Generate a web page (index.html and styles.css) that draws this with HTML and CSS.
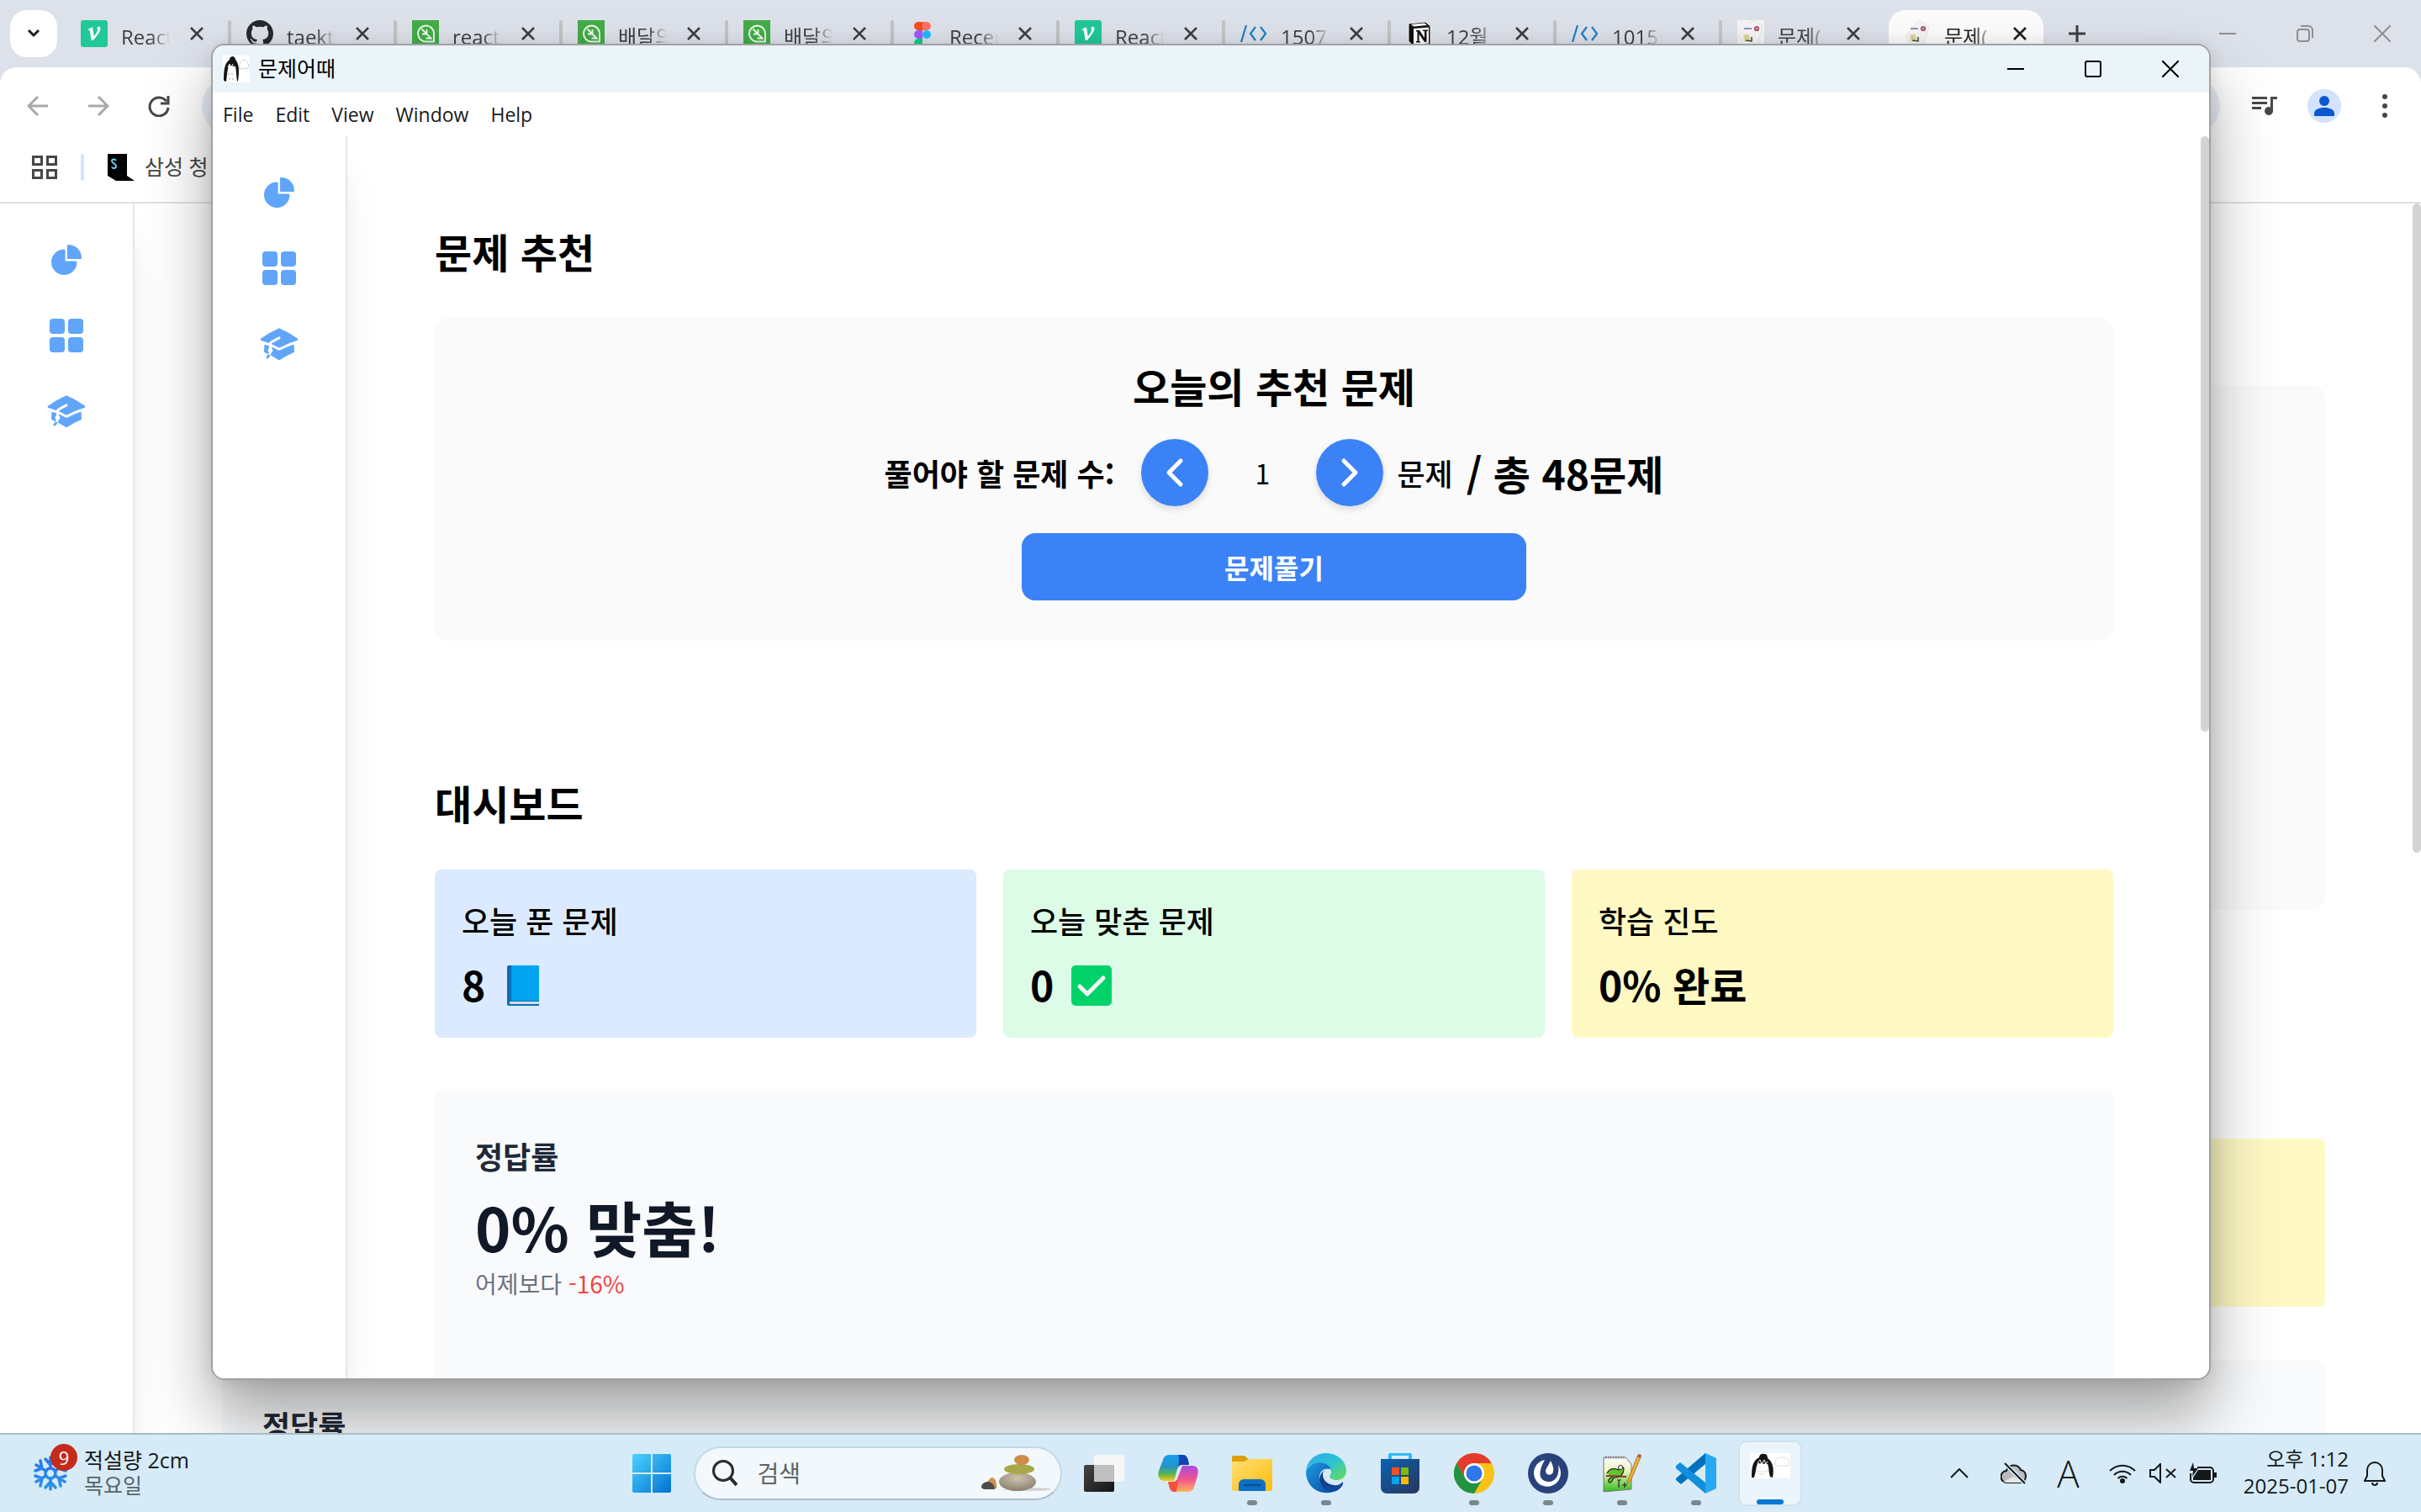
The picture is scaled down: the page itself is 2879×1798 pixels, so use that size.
FILE: index.html
```html
<!DOCTYPE html>
<html lang="ko">
<head>
<meta charset="utf-8">
<title>문제어때</title>
<link rel="stylesheet" href="styles.css">
</head>
<body>
<svg class="defs" aria-hidden="true">
  <defs>
    <linearGradient id="gWin" x1="0" y1="0" x2="1" y2="1"><stop offset="0" stop-color="#4cd3ff"/><stop offset="1" stop-color="#0072d2"/></linearGradient>
    <linearGradient id="gFolder" x1="0" y1="0" x2="1" y2="1"><stop offset="0" stop-color="#ffdf74"/><stop offset="1" stop-color="#fdbd10"/></linearGradient>
    <linearGradient id="gEdgeA" x1="0" y1="0" x2="1" y2="1"><stop offset="0" stop-color="#2ea8f0"/><stop offset=".5" stop-color="#2cc3d2"/><stop offset="1" stop-color="#6be04c"/></linearGradient>
    <linearGradient id="gEdgeB" x1="0" y1="0" x2="1" y2="1"><stop offset="0" stop-color="#1a9be6"/><stop offset="1" stop-color="#0b4aa0"/></linearGradient>
    <linearGradient id="gStore" x1="0" y1="0" x2="1" y2="1"><stop offset="0" stop-color="#0d62b4"/><stop offset="1" stop-color="#27365c"/></linearGradient>
    <linearGradient id="gCopA" x1="0" y1="0" x2="0" y2="1"><stop offset="0" stop-color="#1aa0f0"/><stop offset=".45" stop-color="#2294c8"/><stop offset=".75" stop-color="#5fb648"/><stop offset="1" stop-color="#f6c815"/></linearGradient>
    <linearGradient id="gCopB" x1="0" y1="0" x2="0" y2="1"><stop offset="0" stop-color="#a74ce6"/><stop offset=".5" stop-color="#ee5290"/><stop offset="1" stop-color="#ffb35a"/></linearGradient>
    <linearGradient id="gNpp" x1="0" y1="0" x2="0" y2="1"><stop offset="0" stop-color="#fafafa"/><stop offset=".4" stop-color="#eef5c0"/><stop offset="1" stop-color="#35b81d"/></linearGradient>
    <linearGradient id="gDark" x1="0" y1="0" x2="1" y2="1"><stop offset="0" stop-color="#454545"/><stop offset="1" stop-color="#151515"/></linearGradient>
    <radialGradient id="gStone" cx=".5" cy=".3" r=".8"><stop offset="0" stop-color="#cfc4ae"/><stop offset="1" stop-color="#7f7767"/></radialGradient>
    <linearGradient id="gFlake" x1="0" y1="0" x2="0" y2="1"><stop offset="0" stop-color="#2673ee"/><stop offset="1" stop-color="#2b94e8"/></linearGradient>

    <symbol id="i-pie" viewBox="2.25 2.25 19.5 19.5"><path d="M2.25 13.5a8.25 8.25 0 0 1 8.25-8.25.75.75 0 0 1 .75.75v6.75H18a.75.75 0 0 1 .75.75 8.25 8.25 0 0 1-16.5 0Z"/><path d="M12.5 3a.75.75 0 0 1 .75-.75 8.5 8.5 0 0 1 8.5 8.5.75.75 0 0 1-.75.75h-7.75a.75.75 0 0 1-.75-.75V3Z"/></symbol>
    <symbol id="i-grid" viewBox="0 0 40 40"><rect width="18" height="18" rx="4"/><rect x="22" width="18" height="18" rx="4"/><rect y="22" width="18" height="18" rx="4"/><rect x="22" y="22" width="18" height="18" rx="4"/></symbol>
    <symbol id="i-cap" viewBox="0 0 24 24"><path d="M11.7 2.805a.75.75 0 0 1 .6 0A60.65 60.65 0 0 1 22.83 8.72a.75.75 0 0 1-.231 1.337 49.948 49.948 0 0 0-9.902 3.912l-.003.002c-.114.06-.227.119-.34.18a.75.75 0 0 1-.707 0A50.88 50.88 0 0 0 7.5 12.173v-.224c0-.131.067-.248.172-.311a54.615 54.615 0 0 1 4.653-2.52.75.75 0 0 0-.65-1.352 56.123 56.123 0 0 0-4.78 2.589 1.858 1.858 0 0 0-.859 1.228 49.803 49.803 0 0 0-4.634-1.527.75.75 0 0 1-.231-1.337A60.653 60.653 0 0 1 11.7 2.805Z"/><path d="M13.06 15.473a48.45 48.45 0 0 1 7.666-3.282c.134 1.414.22 2.843.255 4.284a.75.75 0 0 1-.46.711 47.87 47.87 0 0 0-8.105 4.342.75.75 0 0 1-.832 0 47.87 47.87 0 0 0-8.104-4.342.75.75 0 0 1-.461-.71c.035-1.442.121-2.87.255-4.286.921.304 1.83.634 2.726.99v1.27a1.5 1.5 0 0 0-.14 2.508c-.09.38-.222.753-.397 1.11.452.213.901.434 1.346.66a6.727 6.727 0 0 0 .551-1.607 1.5 1.5 0 0 0 .14-2.67v-.645a48.549 48.549 0 0 1 3.44 1.667 2.25 2.25 0 0 0 2.12 0Z"/><path d="M4.462 19.462c.42-.419.753-.89 1-1.395.453.214.902.435 1.347.662a6.742 6.742 0 0 1-1.286 1.794.75.75 0 0 1-1.06-1.06Z"/></symbol>

    <symbol id="i-x" viewBox="0 0 16 16"><path d="M1 1l14 14M15 1L1 15" fill="none" stroke="currentColor" stroke-width="2.6"/></symbol>
    <symbol id="i-velog" viewBox="0 0 32 32"><rect width="32" height="32" rx="3" fill="#20c997"/><path d="M9 10.5l5-2.2 1.8 11c3-4 4.600-6.500 4.300-8.200-.2-1-1.200-1.300-.4-2.600.9-1.300 3.600-1.200 3.700 1.200.1 3.800-4.300 9.200-8.800 14.300h-1.800l-2.300-12.400-1.700.4z" fill="#fff"/></symbol>
    <symbol id="i-github" viewBox="0 0 16 16"><path fill="#24292f" d="M8 0C3.580 0 0 3.580 0 8c0 3.540 2.290 6.530 5.470 7.590.4.070.55-.17.55-.38 0-.19-.01-.82-.01-1.490-2.010.37-2.530-.49-2.690-.94-.09-.23-.48-.94-.82-1.130-.28-.15-.68-.52-.01-.53.63-.01 1.080.58 1.230.82.72 1.210 1.870.87 2.330.66.07-.52.28-.87.51-1.070-1.780-.2-3.640-.89-3.640-3.950 0-.87.31-1.590.82-2.150-.08-.2-.36-1.020.08-2.120 0 0 .67-.21 2.200.82.64-.18 1.320-.27 2-.27s1.360.09 2 .27c1.530-1.040 2.200-.82 2.200-.82.44 1.100.16 1.920.08 2.120.51.56.82 1.270.82 2.150 0 3.070-1.870 3.750-3.650 3.950.29.25.54.73.54 1.480 0 1.070-.01 1.930-.01 2.200 0 .21.15.46.55.38A8.010 8.010 0 0 0 16 8c0-4.420-3.580-8-8-8z"/></symbol>
    <symbol id="i-leaf" viewBox="0 0 32 32"><rect width="32" height="32" fill="#43ac47"/><path d="M26 25.500H16.500A9.500 9.500 0 1 1 26 16v9.500zM11.500 10.500l12 12M17.500 11v5.500H12M16.500 21.500H22" fill="none" stroke="#eef8ee" stroke-width="1.900"/></symbol>
    <symbol id="i-figma" viewBox="0 0 32 32"><path d="M11 2h5v10h-5a5 5 0 0 1 0-10z" fill="#f24e1e"/><path d="M16 2h5a5 5 0 0 1 0 10h-5z" fill="#ff7262"/><path d="M11 12h5v10h-5a5 5 0 0 1 0-10z" fill="#a259ff"/><circle cx="21" cy="17" r="5" fill="#1abcfe"/><path d="M11 22h5v5a5 5 0 1 1-5-5z" fill="#0acf83"/></symbol>
    <symbol id="i-code" viewBox="0 0 32 32"><path d="M7 6L1 26M18 8l-6 8 6 8M24 8l6 8-6 8" fill="none" stroke="#1d7fc6" stroke-width="2.200"/></symbol>
    <symbol id="i-notion" viewBox="0 0 32 32"><path d="M3 4l20-2 6 5v22l-20 2-6-6z" fill="#111" stroke="#f4f4f4" stroke-width="1"/><path d="M6 5l16-1.500 3 2.500-16 1.500zM9 10l18-1.500v19L9 29z" fill="#fff"/><path d="M12 12h4l6 9v-8h-2v-1.500h6V13h-1.500v13H22l-6.500-9.500V25H17v1.500h-5V25h1.500V13.500H12z" fill="#111"/></symbol>
    <symbol id="i-quiz" viewBox="0 0 32 32"><path d="M8 12L18 0l12 8-6 20-16 4-6-14z" fill="#f6f5f4" stroke="#dadada" stroke-width=".6"/><path d="M8 10h9" stroke="#6670b0" stroke-width="1.500"/><circle cx="23" cy="10" r="2.500" fill="#7ba8e0" stroke="#c33" stroke-width="1.200"/><path d="M7 18l6-2 3 7-8 3z" fill="#cfe3a8"/><path d="M8 17l5 2-3 5z" fill="#f0c890"/><path d="M17 20v5l-7-1" fill="none" stroke="#444" stroke-width="1.500"/></symbol>
    <symbol id="i-penguin" viewBox="0 0 48 30"><rect width="48" height="30" fill="#fff"/><path d="M2 29c0-12 1-20 9-24 0-3 3-5 6-4 3 0 4 2 4 5 6 4 8 12 6 23l-3-1c-2-6-1-10-3-15l-12-1c-2 5-2 11-4 17z" fill="#151515"/><path d="M9 12l3-4 2 5 3-5 2 5 2-3" stroke="#fff" stroke-width="1" fill="none"/><path d="M8 20c5 3 10 3 14 0M11 25h6" stroke="#c9c9c9" stroke-width=".7" fill="none"/><path d="M30 15c-1-7 3-10 9-10s8 5 7 10z" fill="none" stroke="#d6d6d6" stroke-width=".8"/></symbol>
    <symbol id="i-penguin-s" viewBox="0 0 32 32"><rect width="32" height="32" fill="#fff"/><path d="M1 30C1 17 2 9 8 5c0-3 2-4 4-4 2 1 3 2 3 4 4 4 5 13 3 25l-1 1c-1-8-1-13-2-18l-8-1C5 18 5 24 4 31z" fill="#151515"/><path d="M6 14l2-4 2 4 2-4" stroke="#fff" fill="none"/><path d="M6 22h8M7 28h6" stroke="#999" stroke-dasharray="2 2" fill="none"/><path d="M20 16c-1-7 2-11 5-11s6 4 6 10z" fill="none" stroke="#bbb" stroke-dasharray="2 1"/></symbol>
  </defs>
</svg>

<div class="desktop">
  <div class="browser">
    <header class="tabstrip">
      <button class="tab-search" aria-label="탭 검색"><svg width="16" height="12" viewBox="0 0 16 12"><path d="M2 2l6 6 6-6" fill="none" stroke="currentColor" stroke-width="3"/></svg></button>
      <div class="tabs">
        <div class="tab"><svg class="fav"><use href="#i-velog"/></svg><span class="tab-title">React</span><button class="tab-x" aria-label="닫기"><svg><use href="#i-x"/></svg></button></div>
        <div class="tab"><svg class="fav"><use href="#i-github"/></svg><span class="tab-title">taekto</span><button class="tab-x" aria-label="닫기"><svg><use href="#i-x"/></svg></button></div>
        <div class="tab"><svg class="fav"><use href="#i-leaf"/></svg><span class="tab-title">react</span><button class="tab-x" aria-label="닫기"><svg><use href="#i-x"/></svg></button></div>
        <div class="tab"><svg class="fav"><use href="#i-leaf"/></svg><span class="tab-title">배달의</span><button class="tab-x" aria-label="닫기"><svg><use href="#i-x"/></svg></button></div>
        <div class="tab"><svg class="fav"><use href="#i-leaf"/></svg><span class="tab-title">배달의</span><button class="tab-x" aria-label="닫기"><svg><use href="#i-x"/></svg></button></div>
        <div class="tab"><svg class="fav"><use href="#i-figma"/></svg><span class="tab-title">Recen</span><button class="tab-x" aria-label="닫기"><svg><use href="#i-x"/></svg></button></div>
        <div class="tab"><svg class="fav"><use href="#i-velog"/></svg><span class="tab-title">React</span><button class="tab-x" aria-label="닫기"><svg><use href="#i-x"/></svg></button></div>
        <div class="tab"><svg class="fav"><use href="#i-code"/></svg><span class="tab-title">1507</span><button class="tab-x" aria-label="닫기"><svg><use href="#i-x"/></svg></button></div>
        <div class="tab"><svg class="fav"><use href="#i-notion"/></svg><span class="tab-title">12월</span><button class="tab-x" aria-label="닫기"><svg><use href="#i-x"/></svg></button></div>
        <div class="tab"><svg class="fav"><use href="#i-code"/></svg><span class="tab-title">1015</span><button class="tab-x" aria-label="닫기"><svg><use href="#i-x"/></svg></button></div>
        <div class="tab"><svg class="fav fav-page"><use href="#i-quiz"/></svg><span class="tab-title">문제(</span><button class="tab-x" aria-label="닫기"><svg><use href="#i-x"/></svg></button></div>
        <div class="tab tab-active"><svg class="fav"><use href="#i-quiz"/></svg><span class="tab-title">문제(</span><button class="tab-x" aria-label="닫기"><svg><use href="#i-x"/></svg></button></div>
      </div>
      <button class="new-tab" aria-label="새 탭"><svg width="22" height="22" viewBox="0 0 22 22"><path d="M11 1v20M1 11h20" stroke="currentColor" stroke-width="3"/></svg></button>
      <div class="win-controls">
        <button aria-label="최소화"><svg width="20" height="20" viewBox="0 0 20 20"><path d="M0 10h20"/></svg></button>
        <button aria-label="이전 크기로"><svg width="20" height="20" viewBox="0 0 20 20"><rect x="1" y="5" width="14" height="14" rx="3"/><path d="M5 1h9a5 5 0 0 1 5 5v9"/></svg></button>
        <button aria-label="닫기"><svg width="20" height="20" viewBox="0 0 20 20"><path d="M0 0l20 20M20 0L0 20"/></svg></button>
      </div>
    </header>
    <div class="toolbar">
      <button class="tool dim" aria-label="뒤로"><svg width="26" height="24" viewBox="0 0 26 24"><path d="M13 1L2 12l11 11M2 12h23"/></svg></button>
      <button class="tool dim" aria-label="앞으로"><svg width="26" height="24" viewBox="0 0 26 24"><path d="M13 1l11 11-11 11M24 12H1"/></svg></button>
      <button class="tool" aria-label="새로고침"><svg width="26" height="26" viewBox="0 0 26 26"><path d="M22 7.500A11 11 0 1 0 24 15M24 1v9h-9"/></svg></button>
      <div class="omnibox"></div>
      <button class="tool" aria-label="미디어 제어"><svg class="solid" width="30" height="24" viewBox="0 0 30 24"><path d="M0 1h18v3H0zM0 7h18v3H0zM0 13h11v3H0zM22 1h8v3h-5v14a5 5 0 1 1-3-4.500z"/></svg></button>
      <button class="avatar" aria-label="프로필"><svg width="24" height="24" viewBox="0 0 24 24"><circle cx="12" cy="6" r="6"/><path d="M0 24v-3c0-5 6-7 12-7s12 2 12 7v3z"/></svg></button>
      <button class="tool" aria-label="메뉴"><svg class="solid" width="6" height="28" viewBox="0 0 6 28"><circle cx="3" cy="3" r="3"/><circle cx="3" cy="14" r="3"/><circle cx="3" cy="25" r="3"/></svg></button>
    </div>
    <div class="bookmarks">
      <svg width="30" height="28" viewBox="0 0 30 28" fill="none" stroke="#474747" stroke-width="3"><path d="M1.500 1.500h10v9h-10zM18.500 1.500h10v9h-10zM1.500 17.500h10v9h-10zM18.500 17.500h10v9h-10z"/></svg>
      <span class="bm-line"></span>
      <a href="#"><svg width="32" height="32" viewBox="0 0 32 32"><path d="M0 0h23v26l9 6H10L0 26z"/><path d="M10 8c-1-2-5-2-5 .5 0 3 5 2.500 5 6 0 3-4 3.500-5 1" fill="none" stroke="#5fd0f5" stroke-width="2"/></svg><span>삼성 청</span></a>
    </div>
    <div class="page">
      <nav class="sidebar">
        <a href="#" aria-label="통계"><svg width="36" height="36"><use href="#i-pie"/></svg></a>
        <a href="#" aria-label="목록"><svg width="40" height="40"><use href="#i-grid"/></svg></a>
        <a href="#" aria-label="학습"><svg width="48" height="48"><use href="#i-cap"/></svg></a>
      </nav>
      <main class="content content-back">
        <div class="recommend recommend-tall"></div>
        <div class="stats"><div class="stat stat-yellow stat-last"></div></div>
        <section class="rate"><h3>정답률</h3></section>
      </main>
      <div class="scroll scroll-back"></div>
    </div>
  </div>

  <div class="app-window">
    <header class="titlebar">
      <svg width="32" height="32"><use href="#i-penguin-s"/></svg>
      <span class="titlebar-name">문제어때</span>
      <div class="win-controls">
        <button aria-label="최소화"><svg width="20" height="20" viewBox="0 0 20 20"><path d="M0 10h20"/></svg></button>
        <button aria-label="최대화"><svg width="20" height="20" viewBox="0 0 20 20"><rect x="1" y="1" width="18" height="18" rx="2"/></svg></button>
        <button aria-label="닫기"><svg width="20" height="20" viewBox="0 0 20 20"><path d="M0 0l20 20M20 0L0 20"/></svg></button>
      </div>
    </header>
    <nav class="menubar"><button>File</button><button>Edit</button><button>View</button><button>Window</button><button>Help</button></nav>
    <div class="page">
      <nav class="sidebar">
        <a href="#" aria-label="통계"><svg width="36" height="36"><use href="#i-pie"/></svg></a>
        <a href="#" aria-label="목록"><svg width="40" height="40"><use href="#i-grid"/></svg></a>
        <a href="#" aria-label="학습"><svg width="48" height="48"><use href="#i-cap"/></svg></a>
      </nav>
      <main class="content">
        <h1>문제 추천</h1>
        <section class="recommend">
          <h2>오늘의 추천 문제</h2>
          <div class="picker">
            <label for="count">풀어야 할 문제 수:</label>
            <div class="stepper">
              <button class="round" aria-label="줄이기"><svg width="26" height="40" viewBox="0 0 26 40"><path d="M20 6L6 20l14 14"/></svg></button>
              <input id="count" type="text" value="1">
              <button class="round" aria-label="늘리기"><svg width="26" height="40" viewBox="0 0 26 40"><path d="M6 6l14 14L6 34"/></svg></button>
              <span class="unit">문제</span>
              <span class="total">/ 총 48문제</span>
            </div>
          </div>
          <button class="solve">문제풀기</button>
        </section>
        <h1 class="dash">대시보드</h1>
        <div class="stats">
          <section class="stat stat-blue"><h3>오늘 푼 문제</h3>
            <p>8 <svg width="66" height="52" viewBox="0 -4 66 52"><path d="M14 2a2 2 0 0 1 2-2h34a2 2 0 0 1 2 2v46H16a2 2 0 0 1-2-2z" fill="#0a6fb8"/><path d="M19 0h31a2 2 0 0 1 2 2v40H19z" fill="#00a4ef"/><path d="M17 43h35v3H17z" fill="#d9d9e0"/></svg></p></section>
          <section class="stat stat-green"><h3>오늘 맞춘 문제</h3>
            <p>0 <svg width="66" height="52" viewBox="0 -4 66 52"><rect x="9" width="48" height="48" rx="5" fill="#00d26a"/><path d="M19 25l9 9 19-19" fill="none" stroke="#f4f4f4" stroke-width="5" stroke-linecap="round" stroke-linejoin="round"/></svg></p></section>
          <section class="stat stat-yellow"><h3>학습 진도</h3><p>0% 완료</p></section>
        </div>
        <section class="rate">
          <h3>정답률</h3>
          <p class="rate-value">0% 맞춤!</p>
          <p class="rate-diff">어제보다 <span>-16%</span></p>
        </section>
      </main>
      <div class="scroll"></div>
    </div>
  </div>

  <footer class="taskbar">
    <div class="weather">
      <div class="flake">
        <svg width="40" height="42" viewBox="0 0 40 42"><g fill="none" stroke="url(#gFlake)" stroke-width="3.500" stroke-linecap="round"><circle cx="20" cy="21" r="6"/><path d="M20 2v13M20 27v13M14.500 18L3 11M25.500 18L37 11M14.500 24L3 31M25.500 24L37 31M14 4l6 7 6-7M14 38l6-7 6 7M2 18l8-3-2-9M38 18l-8-3 2-9M2 24l8 3-2 9M38 24l-8 3 2 9"/></g></svg>
        <span class="badge">9</span>
      </div>
      <div class="weather-text"><span>적설량 2cm</span><span class="muted">목요일</span></div>
    </div>
    <div class="apps">
      <button class="app" aria-label="시작"><svg width="46" height="46" viewBox="0 0 46 46"><path fill="url(#gWin)" d="M2 0h20v22H0V2a2 2 0 0 1 2-2zM24 0h20a2 2 0 0 1 2 2v20H24zM0 24h22v22H2a2 2 0 0 1-2-2zM24 24h22v20a2 2 0 0 1-2 2H24z"/></svg></button>
      <label class="search">
        <svg width="30" height="32" viewBox="0 0 30 32" fill="none" stroke="#2b2b2b" stroke-width="3"><circle cx="13" cy="13" r="11.500"/><path d="M21 21l8 9" stroke-width="4"/></svg>
        <input type="text" placeholder="검색" aria-label="검색">
        <svg width="84" height="44" viewBox="0 0 84 44"><ellipse cx="55" cy="41" rx="28" ry="2" fill="#cfd2d2"/><ellipse cx="43" cy="32" rx="22" ry="11" fill="url(#gStone)"/><ellipse cx="45" cy="17" rx="18" ry="6" fill="#a9a848"/><ellipse cx="48" cy="6" rx="9" ry="6" fill="#cf8c46"/><path d="M6 40c0-8 4-13 7-13s6 6 5 13z" fill="#cc9350"/><path d="M0 39c0-5 4-7 8-7s8 4 8 9H3z" fill="#4b4b4d"/></svg>
      </label>
      <button class="app" aria-label="작업 보기"><svg width="48" height="46" viewBox="0 0 48 46"><rect y="13" width="36" height="32" rx="2" fill="url(#gDark)"/><rect x="12" y="1" width="36" height="32" rx="2" fill="#f6f6f6"/><path d="M12 13h24v20H12z" fill="#bfbfbf"/></svg></button>
      <button class="app" aria-label="Copilot"><svg width="48" height="44" viewBox="0 0 48 44"><path d="M24 0h6c3 0 5 3 6 7l1 4h-8c-3 0-5 2-6 6l-4 14H8c-6 0-9-5-7-12L6 6c1-4 4-6 8-6z" fill="url(#gCopA)"/><path d="M24 0h6c3 0 5 3 6 7l1 5h-9c-2 0-3 1-4 3l1-7c0-4 0-6-1-8z" fill="#1443b5"/><path d="M29 13h12c6 0 8 5 6 12l-4 13c-1 4-4 6-8 6H20c-4 0-6-4-7-8l-1-4h6c3 0 5-2 6-6z" fill="url(#gCopB)"/><path d="M12 32h8l4-3-2 15h-3c-4 0-5-4-6-8z" fill="#f4513c"/></svg></button>
      <button class="app run" aria-label="파일 탐색기"><svg width="48" height="46" viewBox="0 0 48 46"><path d="M0 4a2 2 0 0 1 2-2h12c3 0 4 4 6 4h26a2 2 0 0 1 2 2v6H0z" fill="#dd9f0b"/><path d="M0 9h14c3 0 4-3 7-3h25a2 2 0 0 1 2 2v34a2 2 0 0 1-2 2H2a2 2 0 0 1-2-2z" fill="url(#gFolder)"/><path d="M8 44V36a6 6 0 0 1 6-6h20a6 6 0 0 1 6 6v8z" fill="#0f6fc4"/><path d="M15 37h18" stroke="#0a4f8c" stroke-width="2.500" stroke-linecap="round"/></svg></button>
      <button class="app run" aria-label="Edge"><svg width="48" height="48" viewBox="0 0 48 48"><path d="M0 22C1 9 11 0 24 0s24 9 24 21c0 7-5 11-11 11-5 0-9-2-9-4 0-1 2-3 2-6 0-6-6-11-14-11C8 11 2 15 0 22z" fill="url(#gEdgeA)"/><path d="M0 22C3 14 10 11 16 11c8 0 14 5 14 10-4-4-12-3-14 6-2 12 10 20 19 18-16 7-35-3-35-23z" fill="url(#gEdgeB)"/><path d="M30 19c-9-1-14 6-14 13 2 10 12 16 20 13 4-2 7-5 8-9-10 5-20 1-22-7-1-5 4-9 8-10z" fill="#0d3f8d"/><path d="M20 24c1-4 5-6 9-5 2 4-1 7-1 9 0 3 5 5 10 4 3 0 5-1 6 2-8 6-20 4-23-4-1-2-1-4-1-6z" fill="#d6eaf6"/><path d="M18 28c0 12 14 17 26 6 1 4-4 9-9 11-9 2-17-6-17-17z" fill="#114a9c"/></svg></button>
      <button class="app" aria-label="Store"><svg width="46" height="48" viewBox="0 0 46 48"><path d="M11 10V3a2 2 0 0 1 2-2h20a2 2 0 0 1 2 2v7" fill="none" stroke="#2cbcf5" stroke-width="4"/><path d="M0 7h46v34a7 7 0 0 1-7 7H7a7 7 0 0 1-7-7z" fill="url(#gStore)"/><path d="M13 17h9v9h-9z" fill="#f25022"/><path d="M24 17h9v9h-9z" fill="#7fba00"/><path d="M13 28h9v9h-9z" fill="#00a4ef"/><path d="M24 28h9v9h-9z" fill="#ffb900"/></svg></button>
      <button class="app run" aria-label="Chrome"><svg width="48" height="48" viewBox="0 0 48 48"><circle cx="24" cy="24" r="24" fill="#fbc116"/><path d="M3.200 12A24 24 0 0 1 44.800 12H24a12 12 0 0 0-10.400 18z" fill="#e33b2e"/><path d="M3.200 12L13.600 30A12 12 0 0 0 34.400 30L24 48A24 24 0 0 1 3.200 12z" fill="#229342"/><circle cx="24" cy="24" r="12" fill="#fff"/><circle cx="24" cy="24" r="9.500" fill="#2f77ea"/></svg></button>
      <button class="app run" aria-label="Mattermost"><svg width="48" height="48" viewBox="0 0 48 48"><circle cx="24" cy="24" r="24" fill="#28427b"/><path d="M20 8A16 16 0 1 0 37 16l-1-2c2 12-3 20-11 20-9 0-12-7-10-14 1-5 3-8 5-12z" fill="#fff"/><path d="M27 9c2 4 4 9 3 13a4.600 4.600 0 0 1-9 0c0-4 4-8 6-13z" fill="#fff"/></svg></button>
      <button class="app run" aria-label="Notepad++"><svg width="48" height="48" viewBox="0 0 48 48"><path d="M2 5h26l7 8v30L2 46z" fill="url(#gNpp)" stroke="#777" stroke-width="1"/><path d="M4 5h24" stroke="#888" stroke-width="3" stroke-dasharray="1.500 1.500"/><path d="M6 24c3-6 9-6 14-4 0-5 6-5 6-1 0 5-4 10-9 10-6 0-4 7-8 6-4-2 2-7 4-6" fill="#62c52c" stroke="#222" stroke-width="1.200"/><circle cx="22" cy="17" r="2.500" fill="#fff" stroke="#222"/><path d="M5 27l24 1" stroke="#833" stroke-width="2"/><path d="M30 34L42 4l4 1-12 28-4 3z" fill="#f1ae2c" stroke="#8a6a20" stroke-width=".8"/><path d="M42 4l1-3 4 1-1 4z" fill="#b05a50"/><path d="M20 32v9M18 32h5M27 35v6M24 38h6" stroke="#222" stroke-width="1.200"/></svg></button>
      <button class="app run" aria-label="VS Code"><svg width="48" height="48" viewBox="0 0 48 48"><path d="M35 0v13L6 37l-6-5v-2z" fill="#0072bd"/><path d="M0 15l5-4 30 24v13L0 18z" fill="#118fdb"/><path d="M35 0l13 6v36l-13 6z" fill="#29a9f2"/></svg></button>
      <button class="app app-active" aria-label="문제어때"><svg width="48" height="30"><use href="#i-penguin"/></svg></button>
    </div>
    <div class="tray">
      <svg width="22" height="12" viewBox="0 0 22 12"><path d="M1 11L11 1l10 10"/></svg>
      <svg width="32" height="26" viewBox="0 0 32 26"><path d="M8 24a7 7 0 0 1-1-14C9 3 20 0 24 9c8 1 8 14 0 15z" fill="#b9bbbd"/><path d="M3 23l12-6 12 6-3 1H8z" fill="#e6e6e6" stroke="none"/><path d="M5 1l24 24" stroke="#d5ebf7" stroke-width="5"/><path d="M5 1l24 24"/></svg>
      <span class="ime">A</span>
      <svg width="32" height="24" viewBox="0 0 32 24"><path d="M1 9a21 21 0 0 1 30 0M6 14a14 14 0 0 1 20 0M10.500 18a8 8 0 0 1 11 0"/><circle cx="16" cy="21" r="2" fill="#15181a"/></svg>
      <svg width="32" height="24" viewBox="0 0 32 24"><path d="M1 8h5l7-7v22l-7-7H1zM20 7l11 10M31 7L20 17"/></svg>
      <svg width="32" height="26" viewBox="0 0 32 26"><path d="M9 6h15a4 4 0 0 1 4 4v10a4 4 0 0 1-4 4H5a4 4 0 0 1-4-4v-7"/><path d="M10 9h15v12H4v-3z" fill="#15181a" stroke="none"/><path d="M28 12h4v6h-4zM4 0l1 7h5L3 17l1-7H0z" fill="#15181a" stroke="none"/></svg>
      <div class="clock"><time>오후 1:12</time><time>2025-01-07</time></div>
      <svg width="26" height="30" viewBox="0 0 26 30"><path d="M1 24l3-6V11a9 9 0 0 1 18 0v7l3 6zM10 26a3 3 0 0 0 6 0"/></svg>
    </div>
  </footer>
</div>
</body>
</html>
```
FILE: styles.css
```css
* { box-sizing: border-box; }

body {
  margin: 0;
  font-family: "Open Sans", "Noto Sans CJK KR", sans-serif;
  font-size: 24px;
  color: #000;
}

h1, h2, h3, p { margin: 0; }

button {
  display: flex;
  align-items: center;
  justify-content: center;
  padding: 0;
  border: 0;
  background: none;
  color: inherit;
  font: inherit;
}

a { color: inherit; text-decoration: none; }
svg { flex: none; display: block; }
.defs { position: absolute; width: 0; height: 0; }

.desktop {
  position: relative;
  display: flex;
  flex-direction: column;
  height: 100vh;
  overflow: hidden;
}

/* Browser behind the app window */
.browser {
  flex: 1;
  min-height: 0;
  display: flex;
  flex-direction: column;
  background: #dde1ea;
  overflow: hidden;
}

.tabstrip { display: flex; height: 80px; color: #3c3f43; }

.tab-search {
  width: 56px;
  height: 56px;
  margin: 12px 6px 0 12px;
  border-radius: 20px;
  background: #fff;
  color: #1f1f1f;
}

.tabs { display: flex; }

.tab {
  display: flex;
  align-items: flex-start;
  width: 197px;
  height: 68px;
  margin-top: 12px;
  padding-top: 12px;
}

.tab::before {
  content: "";
  width: 4px;
  height: 32px;
  margin-right: 18px;
  border-radius: 2px;
  background: #c3c3c4;
}

.tab:first-child::before, .tab-active::before { background: none; }
.tab:nth-child(11) { width: 202px; }
.tab-active { width: 184px; border-radius: 20px 20px 0 0; background: #fcfcfc; color: #1f1f1f; }
.tab-active::before { margin-right: 14px; }

.fav { width: 32px; height: 32px; }
.fav-page { background: #f4f4f4; }

.tab-title {
  width: 58px;
  margin-left: 16px;
  line-height: 40px;
  overflow: hidden;
  white-space: nowrap;
  -webkit-mask-image: linear-gradient(90deg, #000 60%, transparent);
  mask-image: linear-gradient(90deg, #000 60%, transparent);
}

.tab-x { width: 32px; height: 32px; margin-left: 16px; }
.tab-x svg { width: 16px; height: 16px; }

.new-tab { width: 56px; height: 56px; margin: 12px 0 0 12px; }

.win-controls { display: flex; margin-left: auto; }
.win-controls button { width: 92px; height: 100%; }
.win-controls svg { fill: none; stroke: currentColor; stroke-width: 2; }
.tabstrip .win-controls { color: #8b8e93; }

.toolbar {
  display: flex;
  align-items: center;
  height: 92px;
  padding: 0 40px 0 32px;
  border-radius: 20px 20px 0 0;
  background: #fff;
  color: #474747;
}

.tool { margin-right: 46px; }
.tool svg { fill: none; stroke: currentColor; stroke-width: 3; }
.tool svg.solid { fill: currentColor; stroke: none; }
.tool:last-child { margin: 0; }
.dim { color: #a9a9a9; }

.omnibox {
  flex: 1;
  height: 68px;
  margin: 0 38px 0 -8px;
  border-radius: 34px;
  background: #e9eef6;
}

.avatar {
  width: 40px;
  height: 40px;
  margin: 0 49px 0 -10px;
  border-radius: 50%;
  background: #d3e3fd;
}
.avatar svg { fill: #0b57d0; }

.bookmarks {
  display: flex;
  align-items: center;
  height: 70px;
  padding: 0 38px 14px;
  border-bottom: 2px solid #dfe1e0;
  background: #fff;
  color: #474747;
}
.bm-line { width: 4px; height: 32px; margin: 0 28px; border-radius: 2px; background: #d3e3fd; }
.bookmarks a { display: flex; align-items: center; gap: 12px; white-space: nowrap; }
.bookmarks a span { padding-bottom: 4px; font-size: 25px; }

/* Shared page: sidebar, content, scrollbar */
.page {
  flex: 1;
  min-height: 0;
  display: flex;
  overflow: hidden;
  background: #fff;
  font-family: "Noto Sans CJK KR", sans-serif;
}

.sidebar {
  flex: none;
  display: flex;
  flex-direction: column;
  gap: 40px;
  width: 160px;
  padding-top: 42px;
  border-right: 2px solid #e5e7eb;
  background: #fff;
  box-shadow: 0 40px 50px -10px rgba(0, 0, 0, .1), 0 16px 20px -12px rgba(0, 0, 0, .1);
}
.sidebar a { display: flex; align-items: center; justify-content: center; height: 50px; fill: #60a5fa; }

.content { flex: 1; min-width: 0; padding: 104px 104px 0; }
.content-back { padding-top: 216px; }

.scroll { flex: none; width: 10px; height: 708px; border-radius: 5px; background: #d3d3d3; }
.scroll-back { height: 772px; }

h1, h2 { font-size: 48px; line-height: 64px; font-weight: 700; }
h3 { font-size: 36px; line-height: 56px; font-weight: 500; }

.recommend {
  display: flex;
  flex-direction: column;
  align-items: center;
  gap: 32px;
  margin-top: 48px;
  padding: 48px;
  border-radius: 16px;
  background: #fafafa;
}
.recommend-tall { height: 624px; margin: 0 0 272px; }

.picker, .stepper { display: flex; align-items: center; }
.picker { gap: 32px; font-size: 36px; line-height: 56px; }
.picker label { font-weight: 700; }

.round {
  width: 80px;
  height: 80px;
  border-radius: 50%;
  background: #3b82f6;
  box-shadow: 0 4px 8px rgba(0, 0, 0, .12);
}
.round svg { fill: none; stroke: #fff; stroke-width: 5; stroke-linecap: round; stroke-linejoin: round; }

.stepper input {
  width: 128px;
  padding: 0;
  border: 0;
  background: none;
  font: 32px/48px "Noto Sans CJK KR", sans-serif;
  text-align: center;
}
.unit { margin-left: 16px; font-weight: 500; }
.total { margin-left: 16px; font-size: 48px; line-height: 64px; font-weight: 700; }

.solve {
  width: 600px;
  height: 80px;
  border-radius: 16px;
  background: #3b82f6;
  color: #fff;
  font-size: 32px;
  font-weight: 700;
}

.dash { margin-top: 160px; }

.stats { display: grid; grid-template-columns: repeat(3, 1fr); gap: 32px; }
.dash + .stats { margin-top: 48px; }
.stat { height: 200px; padding: 32px; border-radius: 8px; }
.stat p {
  display: flex;
  align-items: center;
  gap: 12px;
  margin-top: 16px;
  font-size: 48px;
  line-height: 64px;
  font-weight: 700;
}
.stat-blue { background: #dbeafe; }
.stat-green { background: #dcfce7; }
.stat-yellow { background: #fef9c3; }
.stat-last { grid-column: 3; }

.rate {
  height: 640px;
  margin-top: 64px;
  padding: 48px;
  border-radius: 8px;
  background: #f9fafb;
}
.rate h3 { color: #1f2937; font-weight: 700; }
.rate-value { margin-top: 16px; color: #111827; font-size: 72px; line-height: 80px; font-weight: 700; }
.rate-diff { margin-top: 8px; color: #6b7280; font-size: 28px; line-height: 40px; }
.rate-diff span { color: #ef4444; }

/* App window floating on the desktop */
.app-window {
  position: absolute;
  inset: 52px 250px 157px 251px;
  display: flex;
  flex-direction: column;
  border: 2px solid #a0a1a2;
  border-radius: 16px;
  background: #fff;
  overflow: hidden;
  box-shadow: 0 44px 76px rgba(0, 0, 0, .34), 0 2px 20px rgba(0, 0, 0, .1);
}

.titlebar { display: flex; align-items: center; height: 56px; padding-left: 12px; background: #ebf4f8; }
.titlebar-name { margin-left: 10px; padding-bottom: 4px; font-size: 25px; }
.titlebar .win-controls { height: 100%; }

.menubar { display: flex; align-items: center; gap: 26px; height: 52px; padding-left: 12px; font-size: 23px; color: #1b1b1b; }

/* Taskbar */
.taskbar {
  flex: none;
  position: relative;
  display: grid;
  grid-template-columns: 1fr auto 1fr;
  height: 94px;
  border-top: 2px solid #abbac3;
  background: #d6ebf7;
}

.weather { display: flex; align-items: center; gap: 9px; padding-left: 40px; }
.flake { position: relative; width: 51px; }
.badge {
  position: absolute;
  left: 20px;
  top: -14px;
  width: 32px;
  height: 32px;
  border-radius: 50%;
  background: #c42b1c;
  color: #fff;
  font-size: 22px;
  line-height: 32px;
  text-align: center;
}
.weather-text { display: flex; flex-direction: column; padding-bottom: 2px; font-size: 25px; line-height: 30px; color: #15181a; }
.muted { color: #5a6367; }

.apps { display: flex; align-items: center; }
.app { position: relative; width: 88px; height: 92px; }
.run::after, .app-active::after {
  content: "";
  position: absolute;
  bottom: 8px;
  width: 12px;
  height: 6px;
  border-radius: 3px;
  background: #7b878d;
}
.app-active {
  width: 76px;
  height: 78px;
  margin: 0 6px;
  padding-bottom: 18px;
  border: 2px solid #cfe2ee;
  border-radius: 10px;
  background: #ebf5fb;
}
.app-active::after { bottom: 0; width: 32px; background: #0078d4; }

.search {
  display: flex;
  align-items: center;
  width: 438px;
  height: 64px;
  margin: 0 6px;
  padding: 0 10px 0 20px;
  border: 2px solid #c3d8e4;
  border-bottom-color: #a9bfcc;
  border-radius: 32px;
  background: #f2f8fc;
}
.search input {
  flex: 1;
  min-width: 0;
  margin-left: 24px;
  padding: 0;
  border: 0;
  background: none;
  font: inherit;
  font-size: 28px;
}
.search input::placeholder { color: #5f6366; opacity: 1; }

.tray { display: flex; align-items: center; justify-content: flex-end; padding-right: 42px; color: #15181a; }
.tray svg { fill: none; stroke: #15181a; stroke-width: 2; }
.tray > :nth-child(1) { margin-right: 38px; }
.tray > :nth-child(2) { margin-right: 35px; }
.ime { margin-right: 35px; font-size: 44px; font-weight: 300; line-height: 92px; }
.tray > :nth-child(4), .tray > :nth-child(5) { margin-right: 16px; }
.tray > :nth-child(6) { margin-right: 32px; }
.clock { display: flex; flex-direction: column; align-items: flex-end; margin-right: 18px; padding-bottom: 2px; line-height: 32px; }
```
